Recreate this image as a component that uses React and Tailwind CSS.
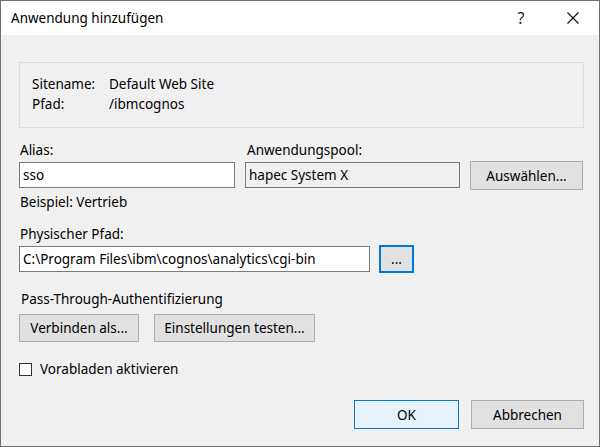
import React from "react";

const font = { fontFamily: '"Noto Sans", "Open Sans", sans-serif' };

function Btn({ className = "", children }) {
  return (
    <div
      className={
        "flex items-center justify-center border border-[#adadad] bg-[#e1e1e1] text-black " +
        className
      }
    >
      {children}
    </div>
  );
}

export default function App() {
  return (
    <div
      className="w-[600px] h-[447px] flex flex-col border border-[#707070] bg-[#f0f0f0] text-black text-[13.5px] leading-[20px] overflow-hidden"
      style={font}
    >
      {/* Title bar */}
      <div className="h-[34px] shrink-0 bg-white flex items-center pl-[10px]">
        <span className="flex-1">Anwendung hinzufügen</span>
        <span className="w-[20px] text-center text-[16px] mr-[36px] text-[#222]">?</span>
        <svg width="12" height="12" viewBox="0 0 12 12" className="mr-[20px]">
          <path d="M0.5 0.5 L11.5 11.5 M11.5 0.5 L0.5 11.5" stroke="#111" strokeWidth="1.1" fill="none" />
        </svg>
      </div>

      {/* Body */}
      <div className="flex-1 flex flex-col pl-[18px] pr-[15px]">
        {/* Group box */}
        <div className="mt-[27px] h-[66px] border border-[#dcdcdc] pl-[12px] pt-[11px]">
          <div className="flex">
            <span className="w-[77px]">Sitename:</span>
            <span>Default Web Site</span>
          </div>
          <div className="flex">
            <span className="w-[77px]">Pfad:</span>
            <span>/ibmcognos</span>
          </div>
        </div>

        {/* Alias / Pool */}
        <div className="mt-[12px] grid grid-cols-[216px_215px_113px] gap-x-[10px] items-start">
          <span className="pl-[1px]">Alias:</span>
          <span className="pl-[2px]">Anwendungspool:</span>
          <span></span>
          <div className="mt-[2px] h-[26px] border border-[#7a7a7a] bg-white pl-[3px] flex items-center">sso</div>
          <div className="mt-[2px] h-[26px] border border-[#7a7a7a] bg-[#f0f0f0] pl-[3px] flex items-center">hapec System X</div>
          <Btn className="mt-[1px] h-[29px]">Auswählen...</Btn>
        </div>

        <div className="mt-[2px] pl-[1px]">Beispiel: Vertrieb</div>

        <div className="mt-[12px] pl-[1px]">Physischer Pfad:</div>
        <div className="flex items-start gap-[9px]">
          <div className="mt-[2px] w-[351px] h-[26px] border border-[#7a7a7a] bg-white pl-[3px] flex items-center whitespace-nowrap">
            C:\Program Files\ibm\cognos\analytics\cgi-bin
          </div>
          <div className="mt-[1px] w-[35px] h-[28px] border-2 border-[#0078d7] bg-[#e1e1e1] flex items-center justify-center">
            ...
          </div>
        </div>

        <div className="mt-[16px] pl-[2px]">Pass-Through-Authentifizierung</div>
        <div className="mt-[5px] flex gap-[15px]">
          <Btn className="w-[120px] h-[28px]">Verbinden als...</Btn>
          <Btn className="w-[161px] h-[28px]">Einstellungen testen...</Btn>
        </div>

        <div className="mt-[17px] flex items-center">
          <div className="w-[13px] h-[13px] border border-[#333] bg-white"></div>
          <span className="ml-[8px]">Vorabladen aktivieren</span>
        </div>

        <div className="mt-[21px] flex justify-end gap-[12px]">
          <div className="w-[105px] h-[29px] border border-[#0078d7] bg-[#e5f1fb] flex items-center justify-center">
            OK
          </div>
          <Btn className="w-[113px] h-[29px]">Abbrechen</Btn>
        </div>
      </div>
    </div>
  );
}
